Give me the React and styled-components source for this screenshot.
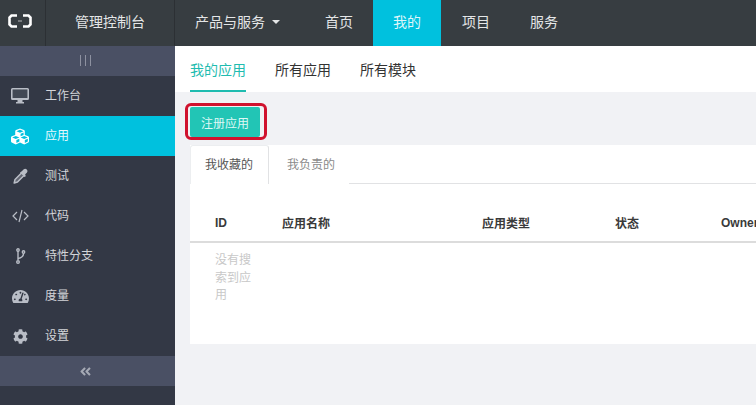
import React from "react";
import styled, { createGlobalStyle } from "styled-components";
import { FaCubes, FaTachometerAlt, FaCog, FaAngleDoubleLeft } from "react-icons/fa";

const Global = createGlobalStyle`
  html, body { margin: 0; padding: 0; width: 756px; height: 405px; overflow: hidden; background: #f1f2f5; }
  body { font-family: "Liberation Sans", "Noto Sans CJK SC", sans-serif; }
  * { box-sizing: border-box; }
`;
const Page = styled.div`display: grid; grid-template-rows: 46px 359px; width: 756px; height: 405px; overflow: hidden;`;
const TopBar = styled.header`display: flex; background: #373d41; color: #e4e6e7; font-size: 14px;`;
const LogoCell = styled.div`width: 46px; display: flex; align-items: center; justify-content: center; padding: 0 5px 4px 0; border-right: 1px solid #2c3034;`;
const TitleCell = styled.div`width: 129px; display: flex; align-items: center; justify-content: center; padding-bottom: 5px; border-right: 1px solid #2c3034;`;
const NavItem = styled.div`
  height: 46px; display: flex; align-items: center; gap: 7px; padding: 0 0 5px ${p => p.$pl}px;
  width: ${p => p.$w}px; flex: none; white-space: nowrap;
  background: ${p => (p.$active ? "#00c1de" : "transparent")};
  color: ${p => (p.$active ? "#dff6fa" : "#e4e6e7")};
`;
const Caret = styled.span`width: 0; height: 0; margin-top: 2px; border-left: 4px solid transparent; border-right: 4px solid transparent; border-top: 4px solid #e4e6e7;`;
const Body = styled.div`display: flex; min-height: 0;`;
const Sidebar = styled.aside`width: 175px; background: #333845; display: flex; flex-direction: column; flex: none;`;
const Strip = styled.div`height: 30px; background: #4a5064; color: #a5a9b4; display: flex; align-items: center; justify-content: center; font-size: 12px; padding-right: ${p => p.$pr || 0}px;`;
const Bars = styled.span`display: flex; gap: 4px; margin-bottom: 2px; & i { display: block; width: 1px; height: 11px; background: #8d91a0; }`;
const SideItem = styled.div`
  height: 40px; display: flex; align-items: center; padding-left: 11px; font-size: 12px;
  background: ${p => (p.$active ? "#00c1de" : "transparent")};
  color: ${p => (p.$active ? "#e6f9fc" : "#d3d5d9")};
`;
const SideIcon = styled.span`
  width: 18px; margin-right: 16px; display: flex; justify-content: center; font-size: ${p => p.$s || 17}px;
  color: ${p => (p.$active ? "#fff" : "#b9bdc6")};
`;
const SideLabel = styled.span`margin-bottom: 3px;`;
const Main = styled.main`flex: 1; min-width: 0; display: flex; flex-direction: column; background: #f1f2f5;`;
const SubNav = styled.nav`height: 46px; background: #fff; display: flex; padding-left: 15px; gap: 29px; flex: none;`;
const SubTab = styled.div`
  width: 56px; height: 46px; line-height: 49px; font-size: 14px; white-space: nowrap;
  color: ${p => (p.$active ? "#1fbcb0" : "#333")};
  border-bottom: 2px solid ${p => (p.$active ? "#1fbcb0" : "transparent")};
`;
const Toolbar = styled.div`height: 53px; padding: 15px 0 0 15px; flex: none;`;
const Btn = styled.button`
  position: relative; width: 70px; height: 30px; border: 0; border-radius: 2px; padding: 0;
  background: #22c5b5; color: #dff8f5; font: 12px "Liberation Sans", "Noto Sans CJK SC", sans-serif;
  &::after { content: ""; position: absolute; left: -5px; top: -4px; right: -7px; bottom: -3px; border: 3px solid #d0122e; border-radius: 6px; }
`;
const Card = styled.section`margin-left: 15px; height: 199px; background: #fff; flex: none;`;
const CardTabs = styled.div`height: 39px; display: flex; border-bottom: 1px solid #e1e2e4;`;
const CardTab = styled.div`
  width: ${p => (p.$active ? 79 : 80)}px; height: 39px; display: flex; align-items: center; font-size: 12px;
  padding: 0 0 3px ${p => (p.$active ? 14 : 18)}px; white-space: nowrap;
  color: ${p => (p.$active ? "#555" : "#8a8a8a")};
  background: #fff;
  ${p => p.$active && "border: 1px solid #eceef0; border-right-color: #e1e2e4; border-bottom: 0; border-radius: 3px 3px 0 0;"}
`;
const TableHead = styled.div`
  margin-top: 20px; height: 39px; display: grid; grid-template-columns: 67px 200px 133px 106px 1fr;
  align-items: center; padding-left: 25px; border-bottom: 2px solid #dcdcdc; font-size: 12px; font-weight: 700; color: #3a3a3a; white-space: nowrap;
`;
const Empty = styled.div`width: 37px; margin: 9px 0 0 25px; font-size: 12px; line-height: 17.5px; color: #c8c8c8;`;

const DesktopIcon = () => (
  <svg width="18" height="16" viewBox="0 0 18 16">
    <path fillRule="evenodd" d="M1.5 0H16.5Q18 0 18 1.5V10.5Q18 12 16.5 12H11.5V14H13V15.5H5V14H6.5V12H1.5Q0 12 0 10.5V1.5Q0 0 1.5 0ZM1.6 1.6V10H16.4V1.6Z" fill="currentColor" />
    <rect x="1.6" y="1.6" width="14.8" height="8.4" fill="currentColor" opacity=".12" />
  </svg>
);
const DropperIcon = () => (
  <svg width="17" height="17" viewBox="0 0 17 17" fill="none">
    <path d="M10.5 3.5L13.5 6.5L6 14L3 14.8L3.2 11Z" fill="currentColor" opacity=".35" />
    <path d="M10 4.5L12.5 7L5.5 14L2.2 15L3 11.5Z" stroke="currentColor" strokeWidth="1.5" strokeLinejoin="round" />
    <path d="M9.5 3.5L11.8 1.2Q13.2 0 14.8 1.4Q16.2 3 15 4.4L12.8 6.8L14 8L12.5 9L8 4.5Z" fill="currentColor" />
  </svg>
);
const CodeIcon = () => (
  <svg width="17" height="14" viewBox="0 0 17 14" fill="none" stroke="currentColor" strokeWidth="1.2">
    <path d="M5 3L1 7L5 11M12 3L16 7L12 11M10 1L7 13" />
  </svg>
);
const ForkIcon = () => (
  <svg width="11" height="16" viewBox="0 0 11 16" fill="none" stroke="currentColor" strokeWidth="1.4">
    <path d="M3 3V12" />
    <path d="M3 10.5Q8.5 9.5 8.5 5.5" />
    <circle cx="3" cy="2" r="1.2" />
    <circle cx="3" cy="14" r="1.3" />
    <circle cx="8.5" cy="4" r="1.2" />
  </svg>
);

const sideItems = [
  ["工作台", DesktopIcon, 18],
  ["应用", FaCubes, 19, true],
  ["测试", DropperIcon, 16],
  ["代码", CodeIcon, 17],
  ["特性分支", ForkIcon, 15],
  ["度量", FaTachometerAlt, 17],
  ["设置", FaCog, 15],
];

export default function App() {
  return (
    <Page>
      <Global />
      <TopBar>
        <LogoCell>
          <svg width="24" height="14" viewBox="0 0 24 14" fill="none">
            <path d="M9 1.5H3.5L1.5 3.5V10.5L3.5 12.5H9M15 1.5H20.5L22.5 3.5V10.5L20.5 12.5H15" stroke="#fff" strokeWidth="2.6" />
            <path d="M10 7H14" stroke="#b8babc" strokeWidth="1" />
          </svg>
        </LogoCell>
        <TitleCell>管理控制台</TitleCell>
        <NavItem $w={125} $pl={20}>产品与服务<Caret /></NavItem>
        <NavItem $w={73} $pl={25}>首页</NavItem>
        <NavItem $w={68} $pl={20} $active>我的</NavItem>
        <NavItem $w={89} $pl={21}>项目</NavItem>
        <NavItem $w={40} $pl={0}>服务</NavItem>
      </TopBar>
      <Body>
        <Sidebar>
          <Strip $pr={5}><Bars><i /><i /><i /></Bars></Strip>
          {sideItems.map(([label, Icon, s, active]) => (
            <SideItem key={label} $active={active}>
              <SideIcon $s={s} $active={active}><Icon /></SideIcon>
              <SideLabel>{label}</SideLabel>
            </SideItem>
          ))}
          <Strip $pr={4}><FaAngleDoubleLeft size={13} /></Strip>
        </Sidebar>
        <Main>
          <SubNav>
            <SubTab $active>我的应用</SubTab>
            <SubTab>所有应用</SubTab>
            <SubTab>所有模块</SubTab>
          </SubNav>
          <Toolbar><Btn>注册应用</Btn></Toolbar>
          <Card>
            <CardTabs>
              <CardTab $active>我收藏的</CardTab>
              <CardTab>我负责的</CardTab>
            </CardTabs>
            <TableHead>
              <span>ID</span><span>应用名称</span><span>应用类型</span><span>状态</span><span>Owner</span>
            </TableHead>
            <Empty>没有搜索到应用</Empty>
          </Card>
        </Main>
      </Body>
    </Page>
  );
}
